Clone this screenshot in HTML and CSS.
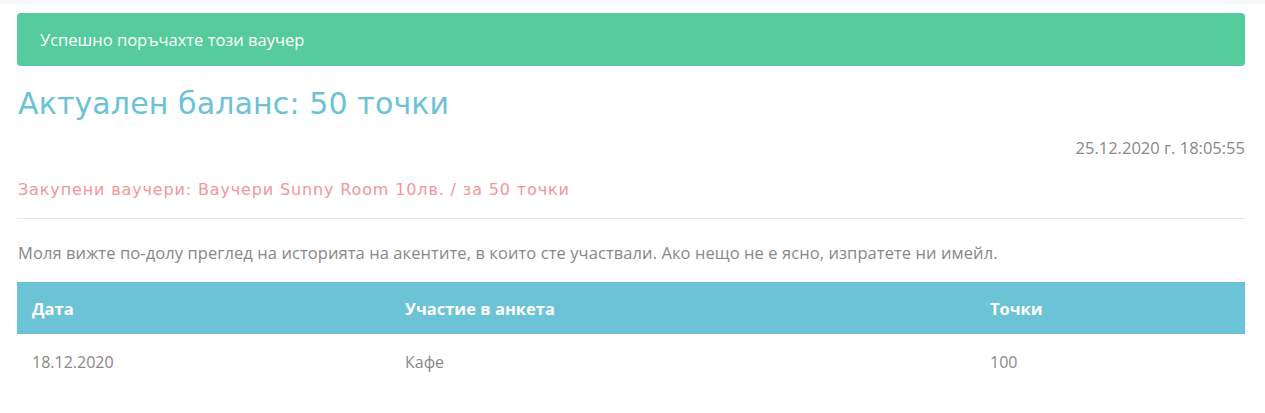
FILE: index.html
```html
<!DOCTYPE html>
<html lang="bg">
<head>
<meta charset="utf-8">
<link rel="stylesheet" href="styles.css">
</head>
<body>
<div class="topbar"></div>
<main class="container">
  <div class="alert">Успешно поръчахте този ваучер</div>
  <h2 class="balance">Актуален баланс: 50 точки</h2>
  <div class="date">25.12.2020 г. 18:05:55</div>
  <p class="bought">Закупени ваучери: Ваучери Sunny Room 10лв. / за 50 точки</p>
  <hr class="sep">
  <p class="intro">Моля вижте по-долу преглед на историята на акентите, в които сте участвали. Ако нещо не е ясно, изпратете ни имейл.</p>
  <table class="history">
    <colgroup><col class="c1"><col class="c2"><col class="c3"></colgroup>
    <thead>
      <tr><th>Дата</th><th>Участие в анкета</th><th>Точки</th></tr>
    </thead>
    <tbody>
      <tr><td>18.12.2020</td><td>Кафе</td><td>100</td></tr>
    </tbody>
  </table>
</main>
</body>
</html>
```
FILE: styles.css
```css
html, body {
  margin: 0;
  padding: 0;
  background: #fff;
}
body {
  font-family: "Open Sans", "Noto Sans", sans-serif;
  font-size: 16.5px;
  color: #888;
}
.topbar {
  height: 4px;
  background: #f7f7f7;
}
.container {
  padding: 9px 20px 0 17px;
}
.alert {
  background: #56cc9d;
  color: #fff;
  border-radius: 4px;
  height: 53px;
  display: flex;
  align-items: center;
  padding: 0 23px;
}
.balance {
  margin: 20px 0 0 1px;
  font-family: "DejaVu Sans", sans-serif;
  font-weight: 400;
  font-size: 30px;
  letter-spacing: 0.12px;
  line-height: 36px;
  color: #6cc3d5;
}
.date {
  text-align: right;
  margin-top: 14px;
  line-height: 24px;
}
.bought {
  margin: 18px 0 0 1px;
  font-family: "DejaVu Sans", sans-serif;
  font-size: 16px;
  letter-spacing: 0.86px;
  color: #f3969a;
  line-height: 24px;
}
.sep {
  border: 0;
  border-top: 1px solid #e6e6e6;
  margin: 16px 0 0;
}
.intro {
  margin: 22px 0 0 1px;
  letter-spacing: 0.08px;
  line-height: 24px;
}
.history {
  width: 100%;
  table-layout: fixed;
  border-collapse: collapse;
  margin-top: 17px;
}
.history .c1 { width: 373px; }
.history .c2 { width: 585px; }
.history th {
  background: #6cc3d5;
  color: #fff;
  font-weight: 700;
  text-align: left;
  height: 52px;
  padding: 0 15px;
}
.history td {
  padding: 0 15px;
  height: 56px;
  font-size: 16px;
  text-align: left;
}
```
